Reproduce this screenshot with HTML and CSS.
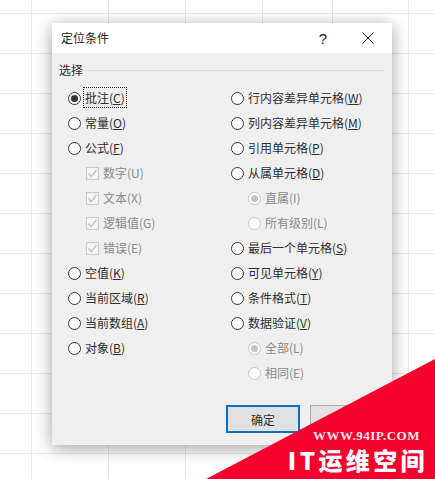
FILE: index.html
```html
<!DOCTYPE html>
<html lang="zh-CN">
<head>
<meta charset="utf-8">
<title>定位条件</title>
<link rel="stylesheet" href="styles.css">
</head>
<body>
<div class="sheet">
  <section class="dialog">
    <header class="titlebar">
      <span class="title">定位条件</span>
      <span class="help">?</span>
      <svg class="close" width="12" height="12" viewBox="0 0 12 12"><path d="M0.5 0.5L11.5 11.5M11.5 0.5L0.5 11.5" stroke="#222" stroke-width="1" fill="none"/></svg>
    </header>
    <div class="body">
      <div class="group-head"><span class="group-label">选择</span><span class="group-line"></span></div>
      <div class="columns">
        <div class="col col-left">
          <div class="row"><span class="radio on"></span><span class="label focus">批注(<u>C</u>)</span></div>
          <div class="row"><span class="radio"></span><span class="label">常量(<u>O</u>)</span></div>
          <div class="row"><span class="radio"></span><span class="label">公式(<u>F</u>)</span></div>
          <div class="row sub-check"><span class="check"><svg width="11" height="11" viewBox="0 0 11 11"><path d="M1.5 5.5L4.3 8.5L9.5 1.8" stroke="#bdbdbd" stroke-width="1.2" fill="none"/></svg></span><span class="label off">数字(U)</span></div>
          <div class="row sub-check"><span class="check"><svg width="11" height="11" viewBox="0 0 11 11"><path d="M1.5 5.5L4.3 8.5L9.5 1.8" stroke="#bdbdbd" stroke-width="1.2" fill="none"/></svg></span><span class="label off">文本(X)</span></div>
          <div class="row sub-check"><span class="check"><svg width="11" height="11" viewBox="0 0 11 11"><path d="M1.5 5.5L4.3 8.5L9.5 1.8" stroke="#bdbdbd" stroke-width="1.2" fill="none"/></svg></span><span class="label off">逻辑值(G)</span></div>
          <div class="row sub-check"><span class="check"><svg width="11" height="11" viewBox="0 0 11 11"><path d="M1.5 5.5L4.3 8.5L9.5 1.8" stroke="#bdbdbd" stroke-width="1.2" fill="none"/></svg></span><span class="label off">错误(E)</span></div>
          <div class="row"><span class="radio"></span><span class="label">空值(<u>K</u>)</span></div>
          <div class="row"><span class="radio"></span><span class="label">当前区域(<u>R</u>)</span></div>
          <div class="row"><span class="radio"></span><span class="label">当前数组(<u>A</u>)</span></div>
          <div class="row"><span class="radio"></span><span class="label">对象(<u>B</u>)</span></div>
        </div>
        <div class="col col-right">
          <div class="row"><span class="radio"></span><span class="label">行内容差异单元格(<u>W</u>)</span></div>
          <div class="row"><span class="radio"></span><span class="label">列内容差异单元格(<u>M</u>)</span></div>
          <div class="row"><span class="radio"></span><span class="label">引用单元格(<u>P</u>)</span></div>
          <div class="row"><span class="radio"></span><span class="label">从属单元格(<u>D</u>)</span></div>
          <div class="row sub-radio"><span class="radio dim on"></span><span class="label off">直属(I)</span></div>
          <div class="row sub-radio"><span class="radio dim"></span><span class="label off">所有级别(L)</span></div>
          <div class="row"><span class="radio"></span><span class="label">最后一个单元格(<u>S</u>)</span></div>
          <div class="row"><span class="radio"></span><span class="label">可见单元格(<u>Y</u>)</span></div>
          <div class="row"><span class="radio"></span><span class="label">条件格式(<u>T</u>)</span></div>
          <div class="row"><span class="radio"></span><span class="label">数据验证(<u>V</u>)</span></div>
          <div class="row sub-radio"><span class="radio dim on"></span><span class="label off">全部(L)</span></div>
          <div class="row sub-radio"><span class="radio dim"></span><span class="label off">相同(E)</span></div>
        </div>
      </div>
      <div class="footer">
        <button class="btn primary">确定</button>
        <button class="btn"></button>
      </div>
    </div>
  </section>
  <svg class="ribbon" width="435" height="479" viewBox="0 0 435 479"><polygon points="206,479 435,359 435,479" fill="#f6002e"/></svg>
  <div class="mark">
    <div class="mark-url">WWW.94IP.COM</div>
    <div class="mark-name">IT运维空间</div>
  </div>
</div>
</body>
</html>
```

FILE: styles.css
```css
* { box-sizing: border-box; }
html, body { margin: 0; padding: 0; }
body { width: 435px; height: 479px; overflow: hidden; font-family: "Noto Sans CJK SC", "Noto Sans", sans-serif; }
.sheet {
  position: relative;
  width: 435px;
  height: 479px;
  overflow: hidden;
  background-color: #fff;
  background-image:
    linear-gradient(#e9e9e1, #e9e9e1),
    linear-gradient(#e9e9e1, #e9e9e1),
    linear-gradient(#e9e9e1, #e9e9e1),
    linear-gradient(#e9e9e1, #e9e9e1),
    linear-gradient(#e9e9e1, #e9e9e1),
    linear-gradient(#e9e9e1, #e9e9e1);
  background-size: 1px 100%;
  background-position: 31px 0, 108px 0, 185px 0, 262px 0, 332px 0, 408px 0;
  background-repeat: no-repeat;
}
.sheet::before {
  content: "";
  position: absolute;
  inset: 0;
  background: repeating-linear-gradient(to bottom, transparent 0, transparent 13px, #e9e9e1 13px, #e9e9e1 14px, transparent 14px, transparent 40px);
}
.dialog {
  position: absolute;
  left: 52px;
  top: 23px;
  width: 340px;
  height: 422px;
  background: #efefef;
  color: #2e2e2e;
  font-size: 12px;
  box-shadow: 0 3px 16px rgba(0, 0, 0, 0.38);
  display: flex;
  flex-direction: column;
}
.titlebar {
  height: 30px;
  flex: none;
  background: #fff;
  display: flex;
  align-items: center;
  padding: 0 18px 0 9px;
}
.title { flex: 1; line-height: 30px; color: #222; }
.help { width: 12px; margin-right: 33px; text-align: center; font: 15px "Liberation Sans", sans-serif; color: #222; }
.close { flex: none; }
.body { flex: 1; display: flex; flex-direction: column; padding: 9px 8px 12px 7px; }
.group-head { display: flex; align-items: center; height: 16px; }
.group-label { line-height: 16px; margin-right: 1px; }
.group-line { flex: 1; height: 1px; background: #dcdcdc; }
.columns { display: flex; margin-top: 8px; height: 300px; }
.col { display: flex; flex-direction: column; }
.col-left { width: 172px; padding-left: 9px; }
.col-right { flex: 1; }
.row { height: 25px; flex: none; display: flex; align-items: center; gap: 4px; }
.sub-check { padding-left: 18px; }
.sub-radio { padding-left: 17px; }
.radio {
  width: 13px;
  height: 13px;
  flex: none;
  border: 1px solid #333;
  border-radius: 50%;
  background: #fff;
  display: flex;
  align-items: center;
  justify-content: center;
}
.radio.on::after { content: ""; width: 7px; height: 7px; border-radius: 50%; background: #333; }
.radio.dim { border-color: #c4c4c4; }
.radio.dim.on::after { background: #c4c4c4; }
.check {
  width: 13px;
  height: 13px;
  flex: none;
  border: 1px solid #cacaca;
  background: #f4f4f4;
  display: flex;
}
.label { line-height: 17px; margin-bottom: 2px; white-space: nowrap; }
.label u { text-underline-offset: 1px; }
.label.off { color: #8a8a8a; }
.label.focus { outline: 1px dotted #222; outline-offset: 1px; }
.footer { display: flex; gap: 10px; margin-top: 19px; padding-left: 167px; }
.btn {
  width: 74px;
  height: 28px;
  padding: 0;
  border: 1px solid #adadad;
  background: #e1e1e1;
  color: #2e2e2e;
  font: 12px "Noto Sans CJK SC", sans-serif;
}
.btn.primary { border: 2px solid #0a6fbd; }
.ribbon { position: absolute; left: 0; top: 0; }
.mark { position: absolute; right: 7px; top: 427px; width: 145px; color: #fff; text-align: right; }
.mark-url {
  font: bold 13px/18px "Liberation Serif", serif;
  letter-spacing: 0.5px;
  color: #ffe9ec;
  padding-right: 8px;
}
.mark-name {
  font: 900 24px/30px "Noto Sans CJK SC", sans-serif;
  letter-spacing: 3.4px;
  white-space: nowrap;
}
```
